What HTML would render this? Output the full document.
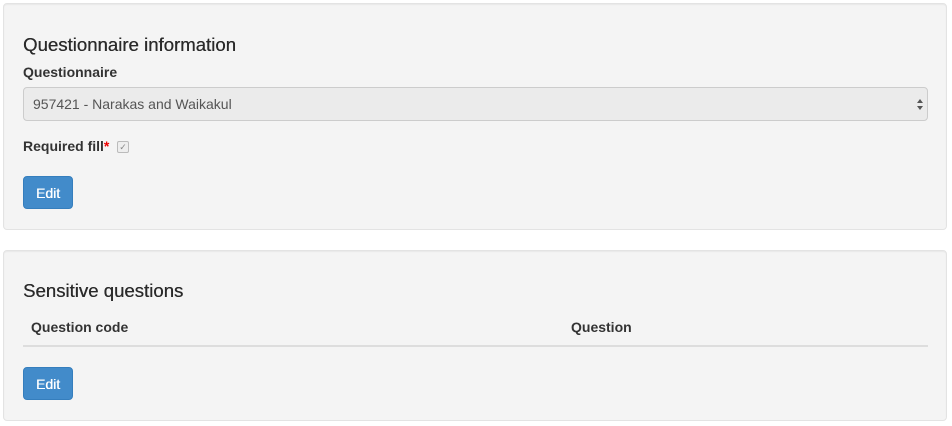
<!DOCTYPE html>
<html><head><style>
body{margin:0;background:#fff;font-family:"Liberation Sans",sans-serif;color:#333;width:952px;height:426px;position:relative;overflow:hidden}
.p{position:absolute;left:3px;width:942px;background:#f4f4f4;border:1px solid #e3e3e3;border-radius:4px;box-shadow:inset 0 1px 1px rgba(0,0,0,.05)}
.a{position:absolute;white-space:nowrap}
h3{margin:0;font-size:18.6px;font-weight:normal;position:absolute;left:19px;color:#2a2a2a;text-shadow:0.3px 0 0 #2a2a2a}
.b{font-weight:bold;font-size:14px}
.btn{position:absolute;left:19px;width:50px;height:33px;background:#428bca;border:1px solid #357ebd;border-radius:4px;color:#fff;font-size:14px;line-height:33px;text-align:center;box-sizing:border-box;text-shadow:0.3px 0 0 #fff}
.sel{position:absolute;left:19px;top:83px;width:905px;height:34px;box-sizing:border-box;border:1px solid #ccc;border-radius:4px;background:#ebebeb;font-size:14px;color:#555;padding:8px 9px;}
</style></head><body>
<div class="p" style="top:3px;height:225px">
<h3 style="top:30px">Questionnaire information</h3>
<div class="a b" style="left:19px;top:60px">Questionnaire</div>
<div class="sel">957421 - Narakas and Waikakul
<svg style="position:absolute;right:3px;top:10px" width="8" height="13" viewBox="0 0 8 13"><path d="M1 5L4 1L7 5Z M1 8L4 12L7 8Z" fill="#555"/></svg></div>
<div class="a b" style="left:19px;top:134px">Required fill<span style="color:#e00">*</span></div>
<div class="a" style="left:113px;top:137px;width:10px;height:10px;border:1px solid #bbb;border-radius:2px;background:#eee;font-size:9px;color:#888;line-height:10px;text-align:center">✓</div>
<div class="btn" style="top:172px">Edit</div>
</div>
<div class="p" style="top:250px;height:169px">
<h3 style="top:29px">Sensitive questions</h3>
<div class="a b" style="left:27px;top:68px">Question code</div>
<div class="a b" style="left:567px;top:68px">Question</div>
<div class="a" style="left:19px;top:94px;width:905px;height:2px;background:#ddd"></div>
<div class="btn" style="top:116px">Edit</div>
</div>
</body></html>
